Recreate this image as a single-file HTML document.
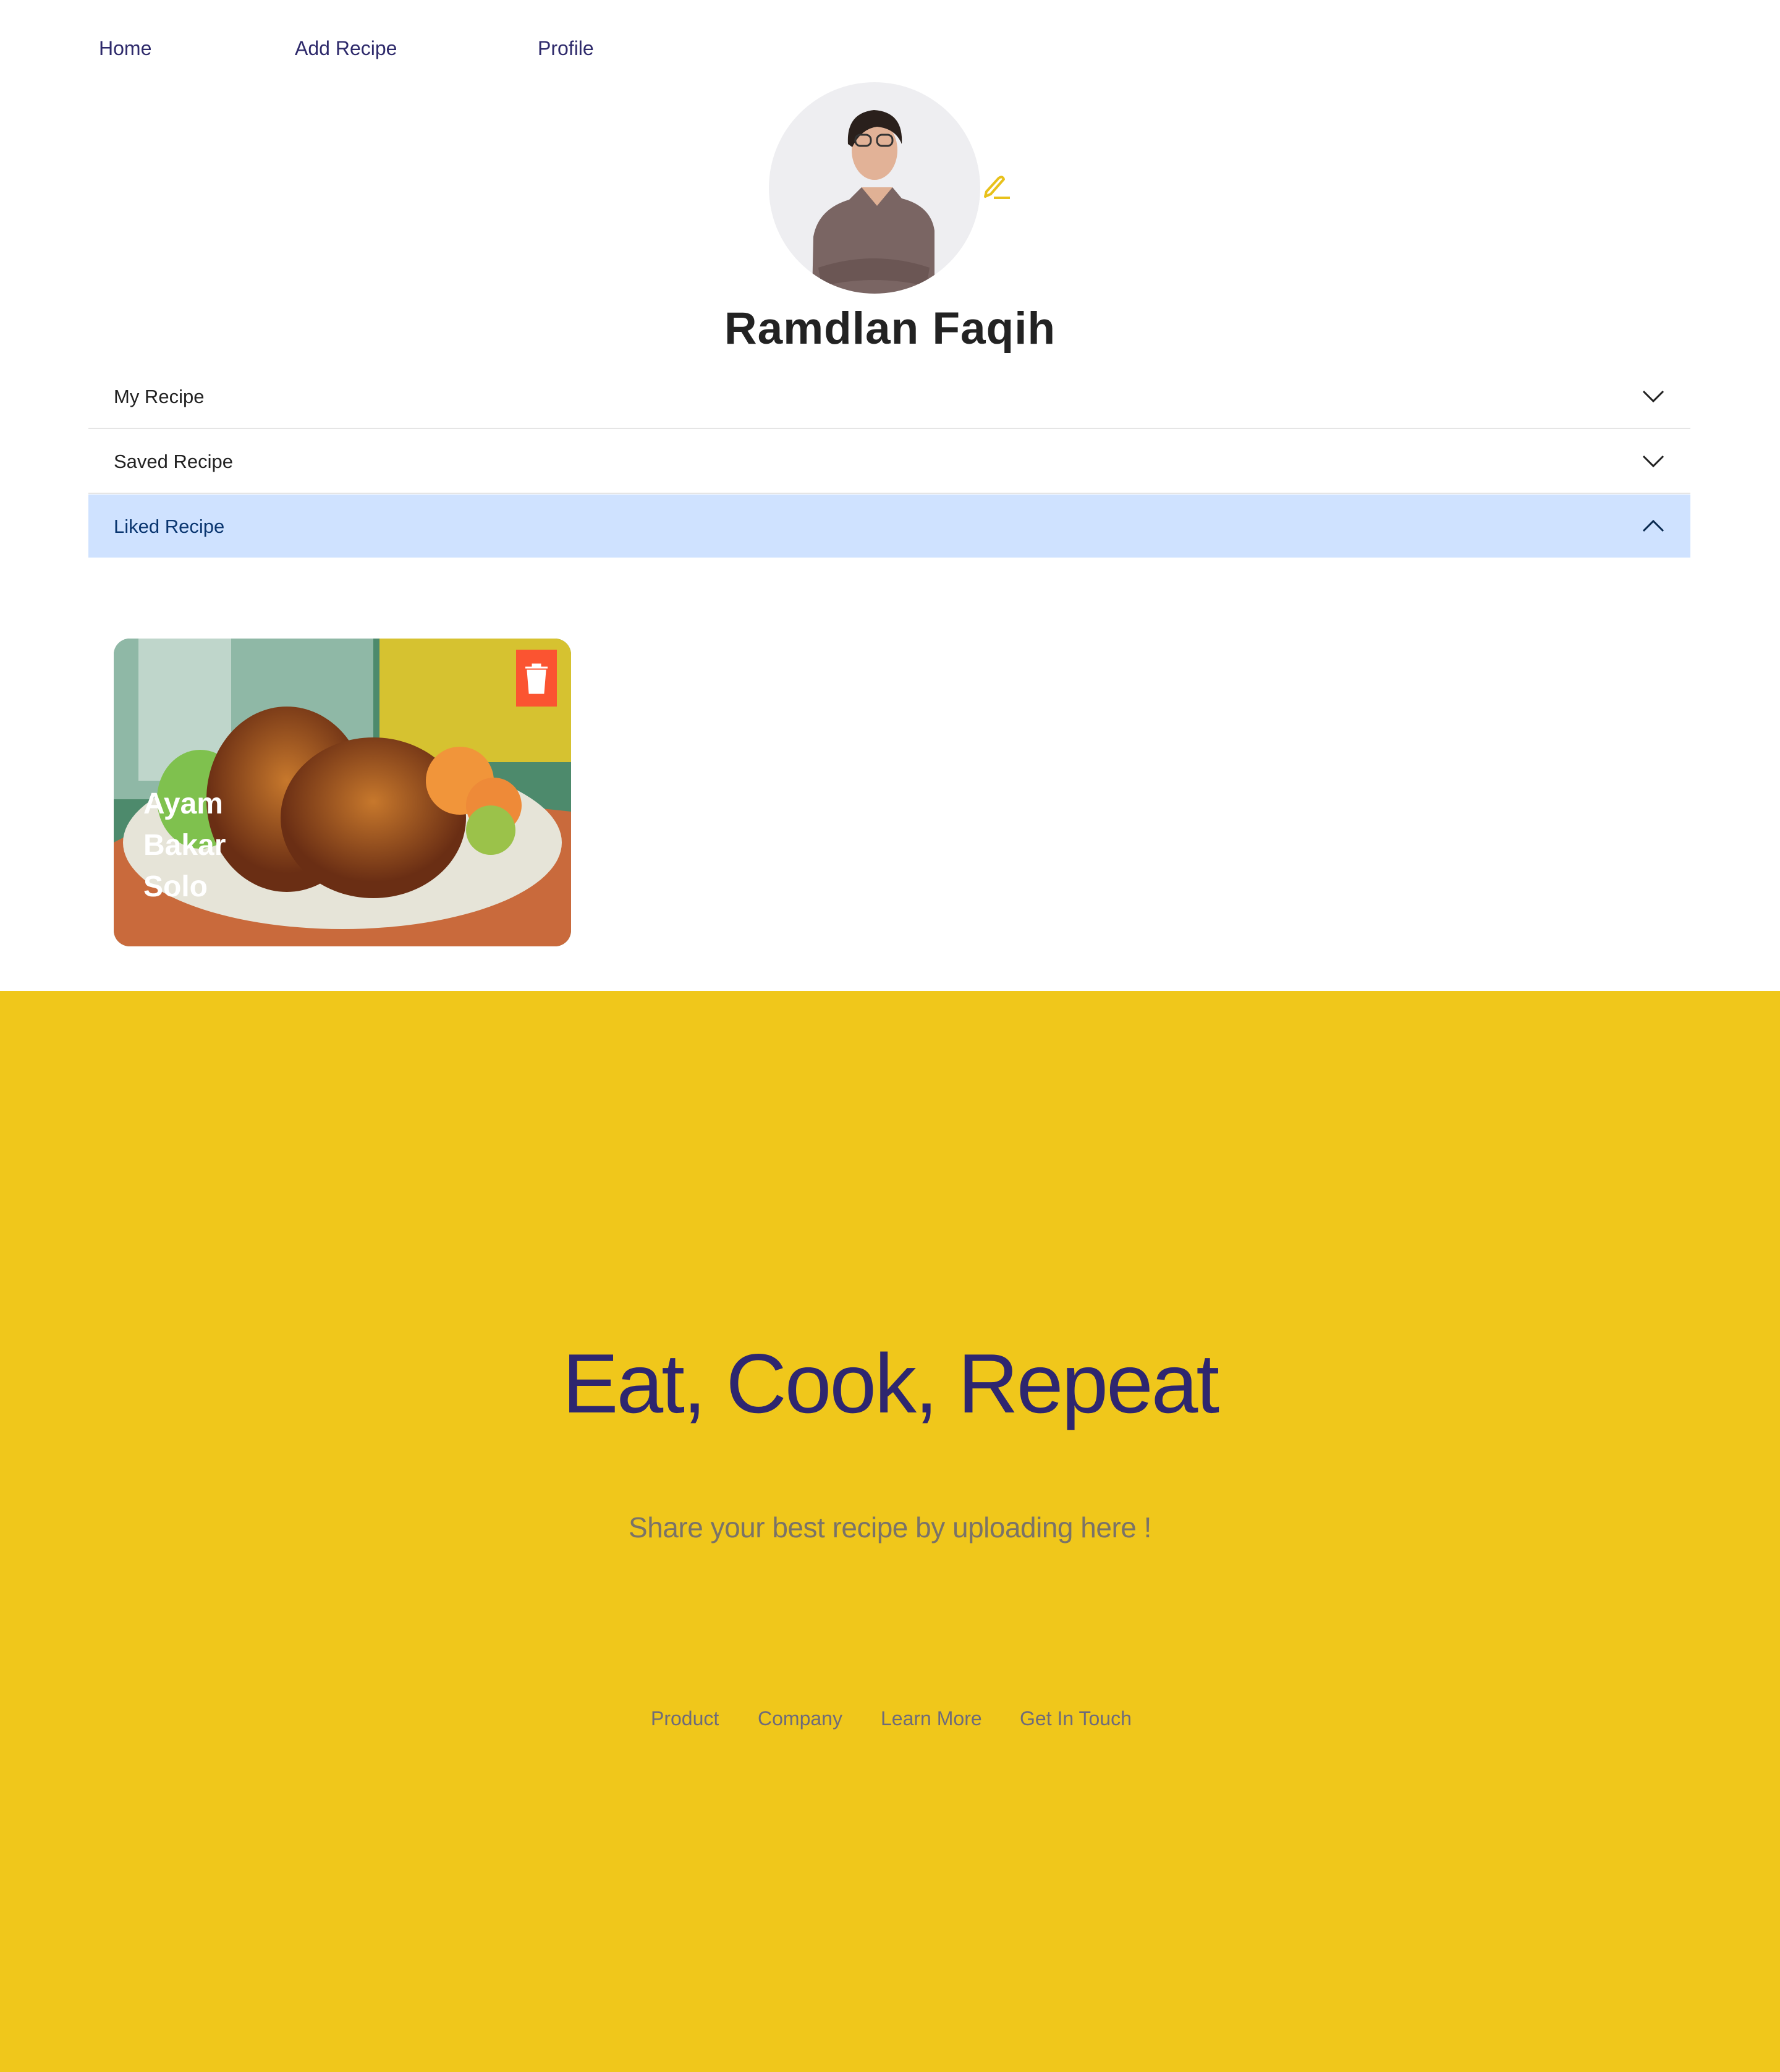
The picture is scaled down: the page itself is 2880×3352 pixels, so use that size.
<!DOCTYPE html>
<html><head><meta charset="utf-8">
<style>
*{margin:0;padding:0;box-sizing:border-box}
body{width:2880px;height:3352px;position:relative;background:#fff;font-family:"Liberation Sans",sans-serif;overflow:hidden}
.a{position:absolute;white-space:nowrap}
.nav{top:60px;font-size:32px;color:#2e2a6b}
.row{position:absolute;left:143px;width:2592px;height:104px;border-bottom:2px solid #e5e5e5}
.row span{position:absolute;left:41px;top:34px;font-size:31px;color:#222}
.row svg{position:absolute;right:42px;top:40px}
.foot{position:absolute;left:0;top:1603px;width:2880px;height:1749px;background:#f0c71b}
.fl{top:2762px;font-size:32px;color:#6e6b7a}
</style></head><body>
<div class="a nav" style="left:160px">Home</div>
<div class="a nav" style="left:477px">Add Recipe</div>
<div class="a nav" style="left:870px">Profile</div>

<svg class="a" style="left:1244px;top:133px" width="342" height="342" viewBox="0 0 342 342">
<defs><clipPath id="c"><circle cx="171" cy="171" r="171"/></clipPath></defs>
<g clip-path="url(#c)">
<rect width="342" height="342" fill="#eeeef1"/>
<path d="M70 342 L72 250 Q80 205 130 190 L150 170 L200 170 L215 188 Q262 200 268 240 L268 342Z" fill="#7a6563"/>
<path d="M150 170 L175 200 L200 170Z" fill="#e0b195"/>
<ellipse cx="171" cy="110" rx="37" ry="48" fill="#e2b297"/>
<path d="M128 100 Q125 50 170 45 Q218 48 215 100 Q205 75 175 72 Q150 75 135 105Z" fill="#2a201c"/>
<rect x="140" y="85" width="25" height="18" rx="8" fill="none" stroke="#333" stroke-width="3"/>
<rect x="175" y="85" width="25" height="18" rx="8" fill="none" stroke="#333" stroke-width="3"/>
<path d="M80 300 Q170 270 260 300 L255 330 Q170 310 85 330Z" fill="#6b5654"/>
</g></svg>
<svg class="a" style="left:1588px;top:282px" width="50" height="44" viewBox="0 0 50 44">
<path d="M6 36 L8 28 L28 6 Q34 2 36 8 L15 32Z" fill="none" stroke="#e8c11b" stroke-width="4" stroke-linejoin="round"/>
<path d="M20 38 H46" stroke="#e8c11b" stroke-width="4"/>
</svg>

<div class="a" style="left:0;width:2880px;text-align:center;top:490px;font-size:73px;font-weight:bold;color:#222;letter-spacing:1px">Ramdlan Faqih</div>

<div class="row" style="top:590px"><span>My Recipe</span><svg width="36" height="22"><path d="M2 3 L18 19 L34 3" fill="none" stroke="#222" stroke-width="3"/></svg></div>
<div class="row" style="top:695px"><span>Saved Recipe</span><svg width="36" height="22"><path d="M2 3 L18 19 L34 3" fill="none" stroke="#222" stroke-width="3"/></svg></div>
<div class="row" style="top:800px;background:#cfe2ff;border-bottom:none;height:102px"><span style="color:#0a3670">Liked Recipe</span><svg width="36" height="22"><path d="M2 19 L18 3 L34 19" fill="none" stroke="#0a2a50" stroke-width="3"/></svg></div>

<svg class="a" style="left:184px;top:1033px" width="740" height="498" viewBox="0 0 740 498">
<defs><clipPath id="k"><rect width="740" height="498" rx="26"/></clipPath>
<radialGradient id="ch" cx="0.5" cy="0.4"><stop offset="0" stop-color="#c7782c"/><stop offset="1" stop-color="#6a2e14"/></radialGradient></defs>
<g clip-path="url(#k)">
<rect width="740" height="498" fill="#4d8a6c"/>
<rect x="0" y="0" width="420" height="260" fill="#8fb8a6"/>
<rect x="40" y="0" width="150" height="230" fill="#dfe9e4" opacity=".6"/>
<rect x="430" y="0" width="310" height="200" fill="#d6c230"/>
<path d="M0 330 Q200 220 740 280 L740 498 L0 498Z" fill="#c96a3c"/>
<ellipse cx="370" cy="330" rx="355" ry="140" fill="#e6e4d8"/>
<ellipse cx="140" cy="260" rx="70" ry="80" fill="#7fc14e"/>
<ellipse cx="280" cy="260" rx="130" ry="150" fill="url(#ch)"/>
<ellipse cx="420" cy="290" rx="150" ry="130" fill="url(#ch)"/>
<circle cx="560" cy="230" r="55" fill="#f1953a"/>
<circle cx="615" cy="270" r="45" fill="#ee8a38"/>
<circle cx="610" cy="310" r="40" fill="#9bc24a"/>
<rect x="651" y="18" width="66" height="92" fill="#fb5431"/>
<path d="M666 47 H702 M678 47 V42 H690 V47 M670 52 H698 L695 88 H673Z" fill="#fff" stroke="#fff" stroke-width="3"/>
</g>
<text x="48" y="283" font-family="Liberation Sans" font-weight="bold" font-size="48" fill="#fff">Ayam</text>
<text x="48" y="350" font-family="Liberation Sans" font-weight="bold" font-size="48" fill="#fff">Bakar</text>
<text x="48" y="417" font-family="Liberation Sans" font-weight="bold" font-size="48" fill="#fff">Solo</text>
</svg>

<div class="foot"></div>
<div class="a" style="left:0;width:2880px;text-align:center;top:2160px;font-size:136px;color:#2e266f;letter-spacing:-3px">Eat, Cook, Repeat</div>
<div class="a" style="left:0;width:2880px;text-align:center;top:2444px;font-size:46px;color:#7a7368;letter-spacing:-0.5px">Share your best recipe by uploading here !</div>
<div class="a fl" style="left:1053px">Product</div>
<div class="a fl" style="left:1226px">Company</div>
<div class="a fl" style="left:1425px">Learn More</div>
<div class="a fl" style="left:1650px">Get In Touch</div>
</body></html>
